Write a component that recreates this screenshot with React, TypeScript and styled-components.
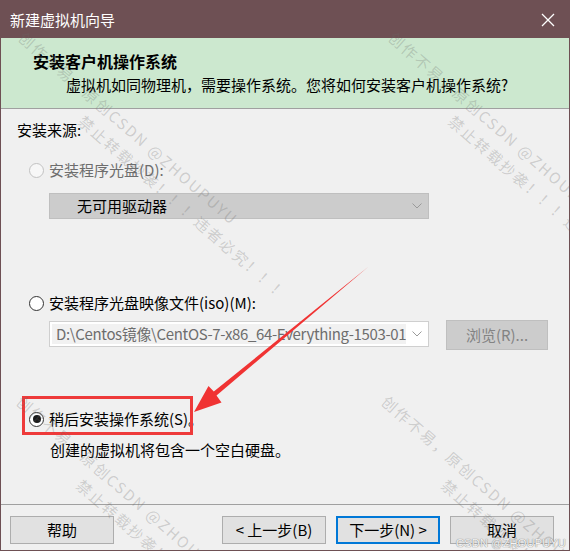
import React from "react";
import styled, { createGlobalStyle } from "styled-components";

const GlobalStyle = createGlobalStyle`
  html, body { margin: 0; padding: 0; background: #f0f0f0; }
  * { box-sizing: border-box; }
  body { font-family: "Noto Sans CJK SC", "Noto Sans", sans-serif; }
`;

const FONT = `"Noto Sans CJK SC", "Noto Sans", sans-serif`;

const Window = styled.div`
  position: relative;
  width: 570px;
  height: 551px;
  display: flex;
  flex-direction: column;
  background: #f0f0f0;
  border: 1px solid #6e5054;
  border-top: none;
  font-family: ${FONT};
  font-size: 15px;
  color: #000;
  overflow: hidden;
`;

const TitleBar = styled.div`
  height: 38px;
  flex: none;
  display: flex;
  align-items: center;
  justify-content: space-between;
  padding: 2px 14px 0 9px;
  background: #6e5054;
  color: #fff;
  font-size: 15px;
  line-height: 20px;
`;

const Header = styled.div`
  height: 71px;
  flex: none;
  display: flex;
  flex-direction: column;
  background: #cce8cf;
  padding: 13px 0 0 32px;
  border-bottom: 1px solid #a0a0a0;
`;

const HeaderTitle = styled.div`
  font-size: 16px;
  font-weight: 700;
  line-height: 20px;
`;

const HeaderText = styled.div`
  font-size: 15px;
  line-height: 20px;
  margin: 4px 0 0 33px;
`;

const Body = styled.div`
  flex: 1;
  display: flex;
  flex-direction: column;
  padding: 11px 0 0 16px;
`;

const Label = styled.div<{ $mt?: number; $indent?: number; $muted?: boolean }>`
  line-height: 20px;
  height: 20px;
  margin-top: ${(p) => p.$mt ?? 0}px;
  margin-left: ${(p) => p.$indent ?? 0}px;
  color: ${(p) => (p.$muted ? "#6d6d6d" : "#000")};
  white-space: nowrap;
`;

const RadioRow = styled.label<{ $mt: number }>`
  position: relative;
  display: flex;
  align-items: center;
  gap: 5px;
  height: 20px;
  margin: ${(p) => p.$mt}px 0 0 12px;
  line-height: 20px;
  white-space: nowrap;
`;

const Radio = styled.span<{ $checked?: boolean; $disabled?: boolean }>`
  width: 15px;
  height: 15px;
  flex: none;
  border-radius: 50%;
  border: 1px solid ${(p) => (p.$disabled ? "#c2c2c2" : "#333")};
  background: ${(p) => (p.$disabled ? "#f7f7f7" : "#fff")};
  display: flex;
  align-items: center;
  justify-content: center;
  &::after {
    content: "";
    display: ${(p) => (p.$checked ? "block" : "none")};
    width: 8px;
    height: 8px;
    border-radius: 50%;
    background: #1a1a1a;
  }
`;

const RadioText = styled.span<{ $disabled?: boolean }>`
  color: ${(p) => (p.$disabled ? "#6d6d6d" : "#000")};
`;

const Highlight = styled.span`
  position: absolute;
  left: -7px;
  top: -13px;
  width: 171px;
  height: 39px;
  border: 3px solid #ee3a3a;
  pointer-events: none;
`;

const Select = styled.div<{ $mt: number }>`
  width: 380px;
  height: 26px;
  margin: ${(p) => p.$mt}px 0 0 32px;
  display: flex;
  align-items: center;
  justify-content: space-between;
  padding: 0 6px 0 27px;
  background: #cccccc;
  border: 1px solid #bfbfbf;
  line-height: 20px;
`;

const FileRow = styled.div`
  display: flex;
  align-items: flex-start;
  gap: 17px;
  height: 30px;
  margin: 7px 0 0 32px;
`;

const Combo = styled.div`
  width: 380px;
  height: 26px;
  margin-top: 1px;
  display: flex;
  align-items: center;
  justify-content: space-between;
  padding: 2px 6px 2px 2px;
  background: #fff;
  border: 1px solid #cfcfcf;
`;

const ComboValue = styled.span`
  width: 354px;
  height: 20px;
  overflow: hidden;
  white-space: nowrap;
  padding-left: 4px;
  background: #f1f1f1;
  color: #6d6d6d;
  line-height: 20px;
  font-size: 15px;
  letter-spacing: -0.35px;
`;

const BrowseButton = styled.div`
  width: 102px;
  height: 30px;
  display: flex;
  align-items: center;
  justify-content: center;
  background: #cccccc;
  border: 1px solid #bfbfbf;
  color: #838383;
  line-height: 20px;
`;

const Footer = styled.div`
  flex: none;
  height: 46px;
  display: flex;
  align-items: flex-start;
  padding: 11px 0 0 9px;
  border-top: 1px solid #a0a0a0;
`;

const Button = styled.div<{ $primary?: boolean; $ml: number }>`
  width: 104px;
  height: 28px;
  margin-left: ${(p) => p.$ml}px;
  display: flex;
  align-items: center;
  justify-content: center;
  background: #e1e1e1;
  border: ${(p) => (p.$primary ? "2px solid #0078d7" : "1px solid #adadad")};
  line-height: 20px;
  white-space: nowrap;
`;

const Overlay = styled.div`
  position: absolute;
  inset: 0;
  pointer-events: none;
  overflow: hidden;
`;

const WatermarkBlock = styled.div<{ $x: number; $y: number }>`
  position: absolute;
  left: ${(p) => p.$x}px;
  top: ${(p) => p.$y}px;
  transform: rotate(41deg);
  transform-origin: 0 0;
  font-family: ${FONT};
  font-size: 15px;
  line-height: 24px;
  letter-spacing: 2px;
  color: rgba(105, 105, 105, 0.27);
  white-space: nowrap;
`;

const WatermarkLine = styled.div<{ $indent?: number }>`
  padding-left: ${(p) => p.$indent ?? 0}px;
`;

const CornerMark = styled.div`
  position: absolute;
  right: 3px;
  bottom: 1px;
  font-family: "Liberation Sans", sans-serif;
  font-size: 11px;
  line-height: 12px;
  color: #f4f4f4;
  text-shadow: 0 0 1px #8a8a8a, 0 0 1px #8a8a8a;
  letter-spacing: 0.2px;
`;

const ArrowSvg = styled.svg`
  position: absolute;
  left: 0;
  top: 0;
`;

const Chevron = () => (
  <svg width="10" height="6" viewBox="0 0 10 6">
    <polyline points="0.5,0.5 5,5 9.5,0.5" fill="none" stroke="#9a9a9a" strokeWidth="1" />
  </svg>
);

const CloseIcon = () => (
  <svg width="14" height="14" viewBox="0 0 14 14">
    <path d="M1 1 L13 13 M13 1 L1 13" stroke="#fff" strokeWidth="1.3" />
  </svg>
);

const Watermark = ({ x, y }: { x: number; y: number }) => (
  <WatermarkBlock $x={x} $y={y}>
    <WatermarkLine>创作不易，原创CSDN @ZHOUPUYU</WatermarkLine>
    <WatermarkLine $indent={100}>禁止转载抄袭！！！违者必究！！！</WatermarkLine>
  </WatermarkBlock>
);

export default function App() {
  return (
    <>
      <GlobalStyle />
      <Window>
        <TitleBar>
          <span>新建虚拟机向导</span>
          <CloseIcon />
        </TitleBar>
        <Header>
          <HeaderTitle>安装客户机操作系统</HeaderTitle>
          <HeaderText>虚拟机如同物理机，需要操作系统。您将如何安装客户机操作系统?</HeaderText>
        </Header>
        <Body>
          <Label>安装来源:</Label>
          <RadioRow $mt={20}>
            <Radio $disabled />
            <RadioText $disabled>安装程序光盘(D):</RadioText>
          </RadioRow>
          <Select $mt={13}>
            <span>无可用驱动器</span>
            <Chevron />
          </Select>
          <RadioRow $mt={74}>
            <Radio />
            <RadioText>安装程序光盘映像文件(iso)(M):</RadioText>
          </RadioRow>
          <FileRow>
            <Combo>
              <ComboValue>D:\Centos镜像\CentOS-7-x86_64-Everything-1503-01.iso</ComboValue>
              <Chevron />
            </Combo>
            <BrowseButton>浏览(R)...</BrowseButton>
          </FileRow>
          <RadioRow $mt={59}>
            <Radio $checked />
            <RadioText>稍后安装操作系统(S)。</RadioText>
            <Highlight />
          </RadioRow>
          <Label $mt={11} $indent={33}>创建的虚拟机将包含一个空白硬盘。</Label>
        </Body>
        <Footer>
          <Button $ml={0}>帮助</Button>
          <Button $ml={108}>&lt; 上一步(B)</Button>
          <Button $ml={10} $primary>下一步(N) &gt;</Button>
          <Button $ml={10}>取消</Button>
        </Footer>
        <Overlay>
          <Watermark x={28} y={26} />
          <Watermark x={398} y={26} />
          <Watermark x={26} y={390} />
          <Watermark x={391} y={390} />
          <ArrowSvg width="570" height="551" viewBox="0 0 570 551">
            <polygon
              points="367,267 215.5,395.5 220.5,402.5 193,412 207.5,386 212.8,391.5"
              fill="#f03333"
            />
          </ArrowSvg>
          <CornerMark>CSDN @ZHOUPUYU</CornerMark>
        </Overlay>
      </Window>
    </>
  );
}
